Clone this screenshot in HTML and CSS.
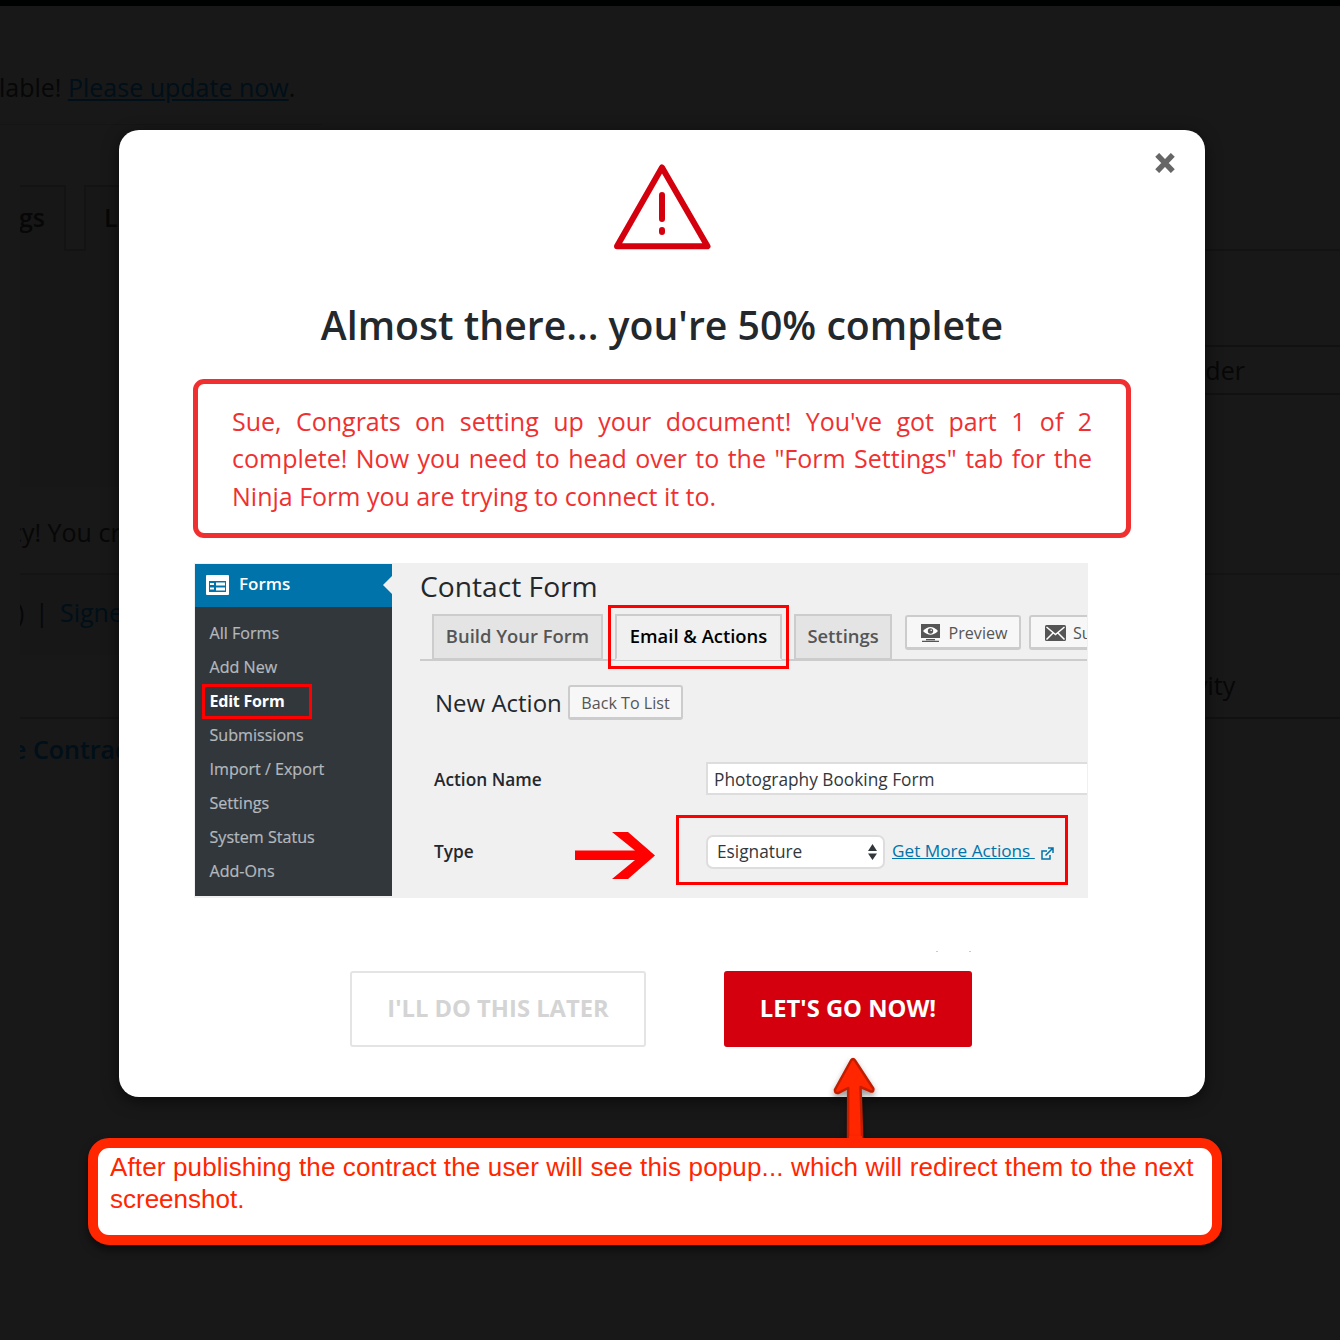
FILE: index.html
```html
<!DOCTYPE html>
<html lang="en">
<head>
<meta charset="utf-8">
<title>Almost there</title>
<link rel="stylesheet" href="styles.css">
</head>
<body>
<div class="page">
  <div class="topbar"></div>
  <div class="notice"><span class="notice-text">lable! <a class="notice-link">Please update now</a>.</span></div>
  <div class="backdrop-columns">
    <div class="col-left">
      <div class="bg-tabs">
        <div class="bg-tab bg-tab-first"><span>gs</span></div>
        <div class="bg-tab-gap"></div>
        <div class="bg-tab bg-tab-second"><span>L</span></div>
      </div>
      <div class="bg-panel"></div>
      <div class="bg-line-text"><span class="t-body">cy! You cre</span></div>
      <div class="bg-filter"><span class="t-filter">)</span><span class="t-bar">|</span><a>Signe</a></div>
      <div class="bg-space"></div>
      <div class="bg-doc"><b class="t-doc">e Contrac</b></div>
    </div>
    <div class="col-right">
      <div class="r-top"></div>
      <div class="r-panel"></div>
      <div class="r-field"><span>nder</span></div>
      <div class="r-mid"></div>
      <div class="r-activity"><span>vity</span></div>
    </div>
  </div>
</div>

<div class="modal">
  <svg class="close" width="22" height="20" viewBox="0 0 22 20"><path d="M3.200 1.800 18.800 18.200M18.800 1.800 3.200 18.200" stroke="#666" stroke-width="5.400"/></svg>
  <svg class="warning" width="98" height="88" viewBox="0 0 98 88" fill="none" stroke="#d5000d" stroke-width="6" stroke-linejoin="round" stroke-linecap="round"><path d="M49 4.500 94.500 83.300H4Z"/><path d="M49 32v24M49 67v2"/></svg>
  <h1 class="title"><span>Almost there... you're 50% complete</span></h1>
  <p class="message">Sue, Congrats on setting up your document! You've got part 1 of 2 complete! Now you need to head over to the "Form Settings" tab for the Ninja Form you are trying to connect it to.</p>

  <div class="guide">
    <div class="side">
      <div class="side-head">
        <svg width="23" height="20" viewBox="0 0 23 20"><rect width="23" height="20" rx="1" fill="#fff"/><path d="M3 6h17v11H3z" fill="#0073aa"/><path d="M4 8h4v2H4zM4 12.500h4v2H4zM10 7.500h9v3h-9zM10 12.500h9v3h-9z" fill="#fff"/></svg>
        <span>Forms</span>
      </div>
      <ul class="side-list">
        <li>All Forms</li>
        <li>Add New</li>
        <li class="current">Edit Form</li>
        <li>Submissions</li>
        <li>Import / Export</li>
        <li>Settings</li>
        <li>System Status</li>
        <li>Add-Ons</li>
      </ul>
    </div>
    <div class="main">
      <div class="form-title"><span>Contact Form</span></div>
      <div class="tabs">
        <div class="tab tab-build"><span>Build Your Form</span></div>
        <div class="tab tab-email"><span>Email &amp; Actions</span></div>
        <div class="tab tab-settings"><span>Settings</span></div>
        <div class="btn btn-preview">
          <svg width="21" height="20" viewBox="0 0 21 20"><path d="M1 1h19v14H1z" fill="#555"/><path d="M3 8Q10.500 0 18 8 10.500 15.500 3 8Z" fill="#fff"/><circle cx="10.500" cy="8" r="2.700" fill="#555"/><circle cx="11.200" cy="7.300" r=".8" fill="#fff"/><path d="M6 16h9v1.300H6zM2 17.800h17V19H2z" fill="#555"/></svg>
          <span>Preview</span>
        </div>
        <div class="btn btn-sub">
          <svg width="21" height="16" viewBox="0 0 21 16"><rect width="21" height="16" rx="1.500" fill="#555"/><path d="m1.500 2 9 7.500 9-7.500M1.500 14.500 8 8M19.500 14.500 13 8" fill="none" stroke="#fff" stroke-width="1.500"/></svg>
          <span>Su</span>
        </div>
      </div>
      <div class="action-row"><span class="new-action">New Action</span><div class="btn btn-back"><span>Back To List</span></div></div>
      <div class="field-row"><span class="label label-name">Action Name</span><div class="input"><span>Photography Booking Form</span></div></div>
      <div class="type-row">
        <span class="label label-type">Type</span>
        <svg class="pointer" width="80" height="48" viewBox="0 0 80 48"><path d="M0 19.500H60L37 1H53L80 24.500 53 48H37L60 29H0Z" fill="#f00"/></svg>
        <div class="type-box">
          <div class="select"><span>Esignature</span><svg width="9" height="16" viewBox="0 0 9 16"><path d="M4.500 0 9 7H0ZM0 9.500h9L4.500 16Z" fill="#32373c"/></svg></div>
          <a class="more">Get More Actions&nbsp;</a>
          <svg class="ext" width="13" height="13" viewBox="0 0 13 13" fill="none" stroke="#0073aa" stroke-width="1.500"><path d="M6 4H1v8h8V8"/><path d="M4.500 8.500 11.500 1.500M7 1h5v5"/></svg>
        </div>
      </div>
    </div>
  </div>

  <div class="buttons">
    <div class="later"><span>I'LL DO THIS LATER</span></div>
    <div class="go"><span>LET'S GO NOW!</span></div>
  </div>
  <svg class="specks" width="36" height="1" viewBox="0 0 36 1"><path d="M0 0h2v1H0zM33 0h2v1h-2z" fill="#eeb9c0"/></svg>
</div>

<svg class="callout-arrow" width="60" height="92" viewBox="0 0 60 92"><path d="M27 6.500Q29 3.500 31 6.500L49.300 34.500Q50 39 45.500 36.800L36.500 33 38.500 94H24L24.200 34 15 38.700Q10.500 40 11 35.500Z" fill="#ff2600" stroke="#c31d00" stroke-width="2.500" stroke-linejoin="round"/></svg>
<div class="callout"><span class="call-1">After publishing the contract the user will see this popup... which will redirect them to the next</span><span class="call-2">screenshot.</span></div>
<div class="arrow-joint"></div>
</body>
</html>
```
FILE: styles.css
```css
* { box-sizing: border-box; }
body {
  margin: 0;
  width: 1340px;
  height: 1340px;
  position: relative;
  overflow: hidden;
  background: #181818;
  font-family: "Open Sans", sans-serif;
}
span, b, a { white-space: nowrap; }
svg { flex-shrink: 0; }

/* dimmed admin page behind the dialog */
.page { height: 1340px; overflow: hidden; color: #070707; font-size: 25px; }
.topbar { height: 6px; background: #000201; }
.notice { height: 119px; width: 322px; display: flex; align-items: center; padding-top: 43px; border-bottom: 1px solid #151515; }
.notice-text { line-height: 34px; margin-left: -1px; }
.notice-link { color: #000f18; text-decoration: underline; }
.backdrop-columns { display: flex; justify-content: space-between; }
.col-left { width: 99px; margin-left: 20px; padding-top: 60px; overflow: hidden; }
.bg-tabs { display: flex; height: 66px; font-weight: 600; }
.bg-tab { border: 2px solid #131313; border-bottom: 0; background: #171717; display: flex; align-items: center; padding-bottom: 5px; flex-shrink: 0; }
.bg-tab-first { width: 46px; border-left: 0; }
.bg-tab-first span { margin-left: -1px; }
.bg-tab-gap { width: 18px; border-bottom: 2px solid #131313; flex-shrink: 0; }
.bg-tab-second { width: 80px; padding-left: 18px; }
.bg-panel { height: 236px; background: #171717; }
.bg-line-text { height: 86px; display: flex; align-items: center; padding-top: 3px; }
.t-body { margin-left: -10px; }
.bg-filter { height: 82px; display: flex; align-items: center; padding-bottom: 7px; background: #171717; border-top: 2px solid #141414; }
.bg-filter a, .bg-doc { color: #000f18; }
.t-filter { width: 14px; margin-left: -3px; flex-shrink: 0; }
.t-bar { width: 29px; text-indent: 4px; flex-shrink: 0; }
.bg-space { height: 62px; }
.bg-doc { height: 62px; border-top: 2px solid #131313; display: flex; align-items: center; }
.t-doc { font-weight: 600; margin-left: -8px; }
.col-right { width: 135px; overflow: hidden; }
.r-top { height: 126px; border-bottom: 2px solid #131313; }
.r-panel { height: 94px; }
.r-field { height: 50px; border: solid #111; border-width: 2px 0; display: flex; align-items: center; }
.r-field span { margin-left: -15px; }
.r-mid { height: 180px; border-bottom: 2px solid #141414; }
.r-activity { height: 144px; border-bottom: 2px solid #111; display: flex; align-items: center; padding-top: 78px; }
.r-activity span { margin-left: -10px; }

/* dialog */
.modal {
  position: absolute;
  left: 119px;
  top: 130px;
  width: 1086px;
  height: 967px;
  border-radius: 20px;
  background: #fff;
  box-shadow: 0 4px 16px rgba(0, 0, 0, .55);
  display: flex;
  flex-direction: column;
  align-items: center;
  padding-top: 33px;
}
.close { position: absolute; right: 29px; top: 23px; }
.specks { position: absolute; left: 817px; top: 821px; }
.warning { display: block; }
.title { margin: 46px 0 0; height: 56px; line-height: 56px; font-size: 39.200px; font-weight: 600; color: #23282d; }
.message {
  margin: 26px 0 0;
  width: 938px;
  height: 159px;
  border: 5px solid #f03030;
  border-radius: 11px;
  padding: 19px 34px 0;
  font-size: 25px;
  line-height: 37.400px;
  color: #f03030;
  text-align: justify;
}
.guide { align-self: flex-start; margin: 25px 0 0 75px; width: 894px; height: 335px; background: #f0f0f0; display: flex; overflow: hidden; }
.side { width: 198px; padding: 1px 0 2px 1px; background: linear-gradient(#32373c, #32373c) content-box; flex-shrink: 0; }
.side-head { height: 43px; background: #0073aa; display: flex; align-items: center; padding: 0 0 2px 11px; gap: 10px; color: #fff; font-size: 17px; font-weight: 600; position: relative; }
.side-head span { margin-top: -2px; }
.side-head::after { content: ""; position: absolute; right: 0; top: 12px; border: solid transparent; border-width: 9px 9px 9px 0; border-right-color: #f0f0f0; }
.side-list { list-style: none; margin: 0; padding: 9px 0 0 7px; font-size: 16.100px; color: #b4b9be; -webkit-text-stroke: .2px #b4b9be; }
.side-list li { height: 34.100px; line-height: 34px; padding-left: 7.500px; }
.side-list .current { width: 110px; height: 35px; border: 3px solid #f00; line-height: 29px; padding-left: 4.500px; margin-bottom: -1.500px; color: #fff; font-weight: 700; letter-spacing: -.25px; -webkit-text-stroke: 0; }
.main { flex: 1; min-width: 0; margin-right: 1px; padding-left: 28px; color: #23282d; overflow: hidden; }
.form-title { height: 42px; line-height: 46px; font-size: 28.200px; }
.tabs { height: 64px; display: flex; padding: 9px 0 0 12px; background: linear-gradient(#ccc, #ccc) 0 54px / 100% 2px no-repeat; }
.tab { height: 46px; border: 2px solid #ccc; background: #e4e4e4; color: #555; font-size: 18.400px; font-weight: 600; flex-shrink: 0; display: flex; align-items: center; justify-content: center; padding-bottom: 4px; }
.tab-build { width: 171px; }
.tab-email { width: 167px; margin-left: 12px; border-bottom-color: #f0f0f0; background: #f0f0f0; color: #000; position: relative; }
.tab-email::after { content: ""; position: absolute; inset: -11px -9px -11px -9px; border: 3px solid #f00; }
.tab-settings { width: 98px; margin-left: 12px; }
.btn { background: #f7f7f7; border: 2px solid #ccc; border-bottom-width: 3px; border-radius: 3px; color: #555; font-size: 16.100px; height: 35px; display: flex; align-items: center; justify-content: center; flex-shrink: 0; }
.btn span { margin-top: 1px; }
.btn-preview { width: 116px; margin: 1px 0 0 13px; gap: 8px; padding-left: 1px; }
.btn-preview svg { margin-top: 2px; }
.btn-sub { width: 130px; margin: 1px 0 0 8px; gap: 7px; justify-content: flex-start; padding-left: 14px; }
.btn-sub svg { margin-top: 1px; }
.action-row { height: 35px; margin-top: 16px; padding-left: 15px; display: flex; align-items: center; }
.new-action { font-size: 24px; width: 133px; line-height: 36px; margin-top: 1px; }
.btn-back { width: 115px; }
.field-row { height: 33px; margin-top: 42px; padding-left: 14px; display: flex; align-items: center; }
.label { font-size: 17.300px; font-weight: 600; }
.label-name { width: 272px; margin-top: 1px; }
.input { flex: 1; height: 33px; border: 2px solid #ddd; border-right: 0; background: #fff; color: #32373c; font-size: 17.300px; display: flex; align-items: center; padding-left: 6px; }
.input span { margin-top: 1px; }
.type-row { height: 70px; margin-top: 20px; padding-left: 14px; display: flex; align-items: center; }
.label-type { width: 141px; margin-top: 2px; }
.pointer { margin-top: 10px; }
.type-box { margin-left: 21px; width: 392px; height: 70px; border: 3px solid #f00; padding-left: 27px; display: flex; align-items: center; flex-shrink: 0; }
.select { width: 179px; height: 34px; margin-top: 4px; border: 2px solid #ddd; border-radius: 7px; background: #fff; color: #32373c; font-size: 17.300px; display: flex; align-items: center; justify-content: space-between; padding: 0 6px 0 9px; }
.select span { margin-top: -2px; }
.more { margin-left: 7px; color: #0073aa; font-size: 17.200px; text-decoration: underline; margin-top: 1px; }
.ext { margin: 6px 0 0 6px; }

.buttons { align-self: flex-start; margin: 73px 0 0 231px; display: flex; gap: 78px; font-size: 23.750px; font-weight: 700; }
.later, .go { height: 76px; border-radius: 3px; display: flex; align-items: center; justify-content: center; padding-bottom: 3px; }
.later { width: 296px; border: 2px solid #e4e4e4; color: #d4d4d4; }
.go { width: 248px; background: #d5000d; color: #fff; }

/* annotation over the capture */
.callout {
  position: absolute;
  left: 88px;
  top: 1138px;
  width: 1134px;
  height: 107px;
  border: 10px solid #ff2600;
  border-radius: 21px;
  background: #fff;
  box-shadow: 0 5px 8px rgba(0, 0, 0, .5);
  padding: 3px 0 0 12px;
  display: flex;
  flex-direction: column;
  font: 26px/32px "Liberation Sans", sans-serif;
  color: #ff2600;
}
.call-1 { letter-spacing: .145px; }
.callout-arrow { position: absolute; left: 824px; top: 1054px; filter: drop-shadow(0 4px 3px rgba(0, 0, 0, .4)); }
.arrow-joint { position: absolute; left: 849px; top: 1136px; width: 13px; height: 5px; background: #ff2600; }
```
